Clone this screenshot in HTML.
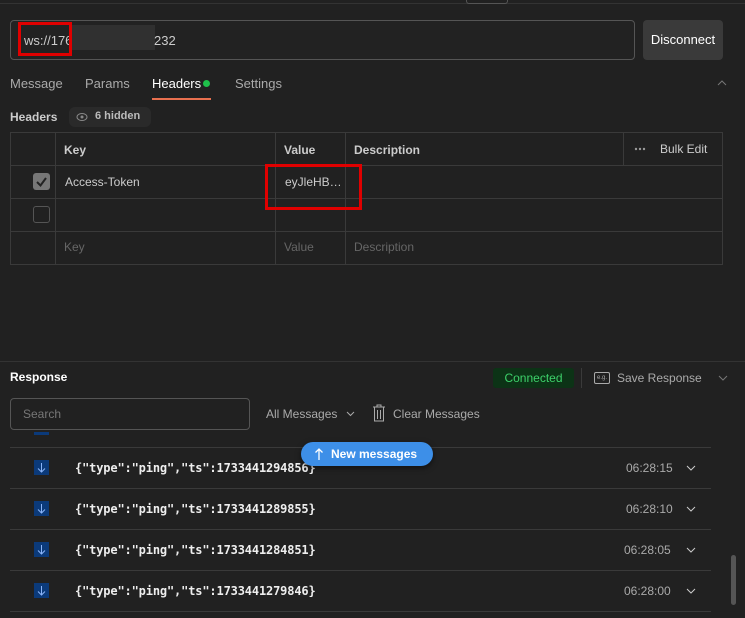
<!DOCTYPE html>
<html><head><style>
*{margin:0;padding:0;box-sizing:border-box}
body{width:745px;height:618px;background:#212121;font-family:"Liberation Sans",sans-serif;color:#ccc;font-size:13px;position:relative;overflow:hidden}
.a{position:absolute}
.mono{font-family:"DejaVu Sans Mono","Liberation Mono",monospace;font-size:12px;color:#eee;font-weight:bold;letter-spacing:-0.15px}
.line{position:absolute;background:#3a3a3a}
.ar{position:absolute;width:15px;height:15px;background:#0b3a7a}
</style></head><body>
<div class="a" style="left:0;top:0;width:745px;height:4px;border-bottom:1px solid #333"></div>
<div class="a" style="left:466px;top:0;width:42px;height:4px;border:1px solid #555;border-top:none;border-radius:0 0 3px 3px"></div>
<div class="a" style="left:10px;top:20px;width:625px;height:40px;border:1px solid #555;border-radius:4px;background:#222"></div>
<div class="a" style="left:24px;top:33px;color:#ccc;font-size:13px">ws://176</div>
<div class="a" style="left:72px;top:25px;width:30px;height:22px;background:#2c2c2c"></div>
<div class="a" style="left:70px;top:25px;width:85px;height:25px;background:#303030"></div>
<div class="a" style="left:154px;top:33px;color:#ccc">232</div>
<div class="a" style="left:18px;top:22px;width:54px;height:34px;border:3px solid #e00000"></div>
<div class="a" style="left:643px;top:20px;width:80px;height:40px;background:#3a3a3a;border-radius:4px;color:#fff;font-size:13px;line-height:40px;text-align:center">Disconnect</div>
<div class="a" style="left:10px;top:76px;color:#aaa">Message</div>
<div class="a" style="left:85px;top:76px;color:#aaa">Params</div>
<div class="a" style="left:152px;top:76px;color:#fff">Headers</div>
<div class="a" style="left:203px;top:80px;width:7px;height:7px;border-radius:50%;background:#1ec04a"></div>
<div class="a" style="left:152px;top:98px;width:59px;height:2px;background:#e8704f"></div>
<div class="a" style="left:235px;top:76px;color:#aaa">Settings</div>
<svg class="a" style="left:717px;top:80px" width="10" height="6"><path d="M1 5L5 1L9 5" stroke="#777" fill="none"/></svg>
<div class="a" style="left:10px;top:110px;color:#ccc;font-weight:bold;font-size:12px">Headers</div>
<div class="a" style="left:69px;top:107px;width:82px;height:20px;background:#2a2a2a;border-radius:6px"></div>
<svg class="a" style="left:76px;top:112px" width="12" height="10"><ellipse cx="6" cy="5" rx="5" ry="3.5" stroke="#888" fill="none"/><circle cx="6" cy="5" r="1.5" fill="#888"/></svg>
<div class="a" style="left:95px;top:110px;color:#bbb;font-size:11px;font-weight:bold">6 hidden</div>
<div class="a" style="left:10px;top:132px;width:713px;height:133px;border:1px solid #3a3a3a"></div>
<div class="line" style="left:10px;top:165px;width:713px;height:1px"></div>
<div class="line" style="left:10px;top:198px;width:713px;height:1px"></div>
<div class="line" style="left:10px;top:231px;width:713px;height:1px"></div>
<div class="line" style="left:55px;top:132px;width:1px;height:133px"></div>
<div class="line" style="left:275px;top:132px;width:1px;height:133px"></div>
<div class="line" style="left:345px;top:132px;width:1px;height:133px"></div>
<div class="line" style="left:623px;top:132px;width:1px;height:33px"></div>
<div class="a" style="left:64px;top:143px;color:#ccc;font-weight:bold;font-size:12px">Key</div>
<div class="a" style="left:284px;top:143px;color:#ccc;font-weight:bold;font-size:12px">Value</div>
<div class="a" style="left:354px;top:143px;color:#ccc;font-weight:bold;font-size:12px">Description</div>
<svg class="a" style="left:634px;top:147px" width="12" height="4"><circle cx="2" cy="2" r="1.2" fill="#999"/><circle cx="6" cy="2" r="1.2" fill="#999"/><circle cx="10" cy="2" r="1.2" fill="#999"/></svg>
<div class="a" style="left:660px;top:142px;color:#ccc;font-size:12px">Bulk Edit</div>
<div class="a" style="left:33px;top:173px;width:17px;height:17px;background:#777;border-radius:3px"></div>
<svg class="a" style="left:33px;top:173px" width="17" height="17"><path d="M4 9L7.5 12.5L13 5" stroke="#222" stroke-width="2" fill="none"/></svg>
<div class="a" style="left:65px;top:175px;color:#ccc;font-size:12px">Access-Token</div>
<div class="a" style="left:285px;top:175px;color:#ccc;font-size:12px">eyJleHB…</div>
<div class="a" style="left:265px;top:164px;width:97px;height:46px;border:3px solid #e00000"></div>
<div class="a" style="left:33px;top:206px;width:17px;height:17px;border:1px solid #555;border-radius:3px"></div>
<div class="a" style="left:64px;top:240px;color:#666;font-size:12px">Key</div>
<div class="a" style="left:284px;top:240px;color:#666;font-size:12px">Value</div>
<div class="a" style="left:354px;top:240px;color:#666;font-size:12px">Description</div>
<div class="a" style="left:0;top:361px;width:745px;height:1px;background:#333"></div>
<div class="a" style="left:10px;top:370px;color:#fff;font-weight:bold;font-size:12px">Response</div>
<div class="a" style="left:493px;top:368px;width:81px;height:20px;background:#0c3316;border-radius:3px;color:#3dd16a;font-size:12px;line-height:20px;text-align:center">Connected</div>
<div class="a" style="left:581px;top:368px;width:1px;height:20px;background:#3a3a3a"></div>
<div class="a" style="left:594px;top:372px;width:16px;height:12px;border:1px solid #aaa;border-radius:2px;color:#aaa;font-size:6px;text-align:center;line-height:10px">e.g.</div>
<div class="a" style="left:617px;top:371px;color:#aaa;font-size:12px">Save Response</div>
<svg class="a" style="left:718px;top:375px" width="10" height="6"><path d="M1 1L5 5L9 1" stroke="#777" fill="none"/></svg>
<div class="a" style="left:10px;top:398px;width:240px;height:32px;border:1px solid #555;border-radius:4px;color:#777;font-size:12px;line-height:30px;padding-left:12px">Search</div>
<div class="a" style="left:266px;top:407px;color:#aaa;font-size:12px">All Messages</div>
<svg class="a" style="left:346px;top:411px" width="9" height="6"><path d="M1 1L4.5 4.5L8 1" stroke="#aaa" fill="none"/></svg>
<svg class="a" style="left:372px;top:404px" width="14" height="18"><path d="M1 3H13M5 3V1H9V3M2.5 3V17H11.5V3M5.5 6V15M8.5 6V15" stroke="#aaa" fill="none"/></svg>
<div class="a" style="left:393px;top:407px;color:#aaa;font-size:12px">Clear Messages</div>
<div class="a" style="left:34px;top:432px;width:15px;height:3px;background:#0b3a7a"></div>
<div class="line" style="left:10px;top:447px;width:701px;height:1px"></div>
<div class="line" style="left:10px;top:488px;width:701px;height:1px"></div>
<div class="line" style="left:10px;top:529px;width:701px;height:1px"></div>
<div class="line" style="left:10px;top:570px;width:701px;height:1px"></div>
<div class="line" style="left:10px;top:611px;width:701px;height:1px"></div>

<div class="ar" style="left:34px;top:460px"></div><svg class="a" style="left:34px;top:460px" width="15" height="15"><path d="M7.5 3V12M4 8.5L7.5 12L11 8.5" stroke="#8ab4f8" fill="none"/></svg>
<div class="a mono" style="left:75px;top:461px">{"type":"ping","ts":1733441294856}</div>
<div class="a" style="left:626px;top:461px;color:#aaa;font-size:12px">06:28:15</div>
<svg class="a" style="left:686px;top:465px" width="10" height="6"><path d="M1 1L5 5L9 1" stroke="#ccc" fill="none"/></svg>

<div class="ar" style="left:34px;top:501px"></div><svg class="a" style="left:34px;top:501px" width="15" height="15"><path d="M7.5 3V12M4 8.5L7.5 12L11 8.5" stroke="#8ab4f8" fill="none"/></svg>
<div class="a mono" style="left:75px;top:502px">{"type":"ping","ts":1733441289855}</div>
<div class="a" style="left:626px;top:502px;color:#aaa;font-size:12px">06:28:10</div>
<svg class="a" style="left:686px;top:506px" width="10" height="6"><path d="M1 1L5 5L9 1" stroke="#ccc" fill="none"/></svg>

<div class="ar" style="left:34px;top:542px"></div><svg class="a" style="left:34px;top:542px" width="15" height="15"><path d="M7.5 3V12M4 8.5L7.5 12L11 8.5" stroke="#8ab4f8" fill="none"/></svg>
<div class="a mono" style="left:75px;top:543px">{"type":"ping","ts":1733441284851}</div>
<div class="a" style="left:624px;top:543px;color:#aaa;font-size:12px">06:28:05</div>
<svg class="a" style="left:686px;top:547px" width="10" height="6"><path d="M1 1L5 5L9 1" stroke="#ccc" fill="none"/></svg>

<div class="ar" style="left:34px;top:583px"></div><svg class="a" style="left:34px;top:583px" width="15" height="15"><path d="M7.5 3V12M4 8.5L7.5 12L11 8.5" stroke="#8ab4f8" fill="none"/></svg>
<div class="a mono" style="left:75px;top:584px">{"type":"ping","ts":1733441279846}</div>
<div class="a" style="left:624px;top:584px;color:#aaa;font-size:12px">06:28:00</div>
<svg class="a" style="left:686px;top:588px" width="10" height="6"><path d="M1 1L5 5L9 1" stroke="#ccc" fill="none"/></svg>

<div class="a" style="left:301px;top:442px;width:132px;height:24px;background:#3d8fe8;border-radius:12px;box-shadow:0 2px 6px rgba(0,0,0,.5)"></div>
<svg class="a" style="left:314px;top:447px" width="10" height="14"><path d="M5 13V2M1.5 5.5L5 2L8.5 5.5" stroke="#fff" stroke-width="1.3" fill="none"/></svg>
<div class="a" style="left:331px;top:447px;color:#fff;font-size:12px;font-weight:bold">New messages</div>
<div class="a" style="left:731px;top:555px;width:5px;height:50px;background:#555;border-radius:3px"></div>
</body></html>
